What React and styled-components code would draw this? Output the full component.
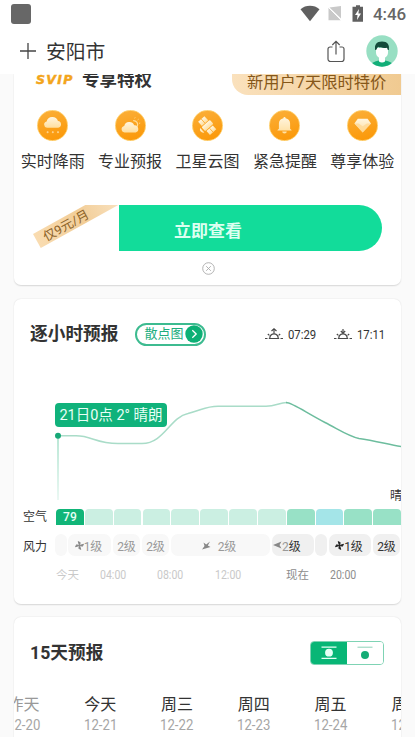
import React from 'react';
import styled, { createGlobalStyle } from 'styled-components';

const GlobalStyle = createGlobalStyle`
  * { box-sizing: border-box; }
  body {
    margin: 0;
    background: #fafafa;
    color: #333;
    font-family: Roboto, 'Noto Sans CJK SC', sans-serif;
    overflow: hidden;
  }
  svg { display: block; flex: none; }
`

const Screen = styled.div`
  width: 415px;
  height: 737px;
  overflow: hidden;
  display: flex;
  flex-direction: column;
`

const StatusBar = styled.div`
  height: 28px;
  flex: none;
  background: #fff;
  display: flex;
  align-items: center;
  padding: 0 9px 0 11px;
`

const AppDot = styled.div`
  width: 20px;
  height: 20px;
  border-radius: 3px;
  background: #676767;
  margin-right: auto;
`

const Clock = styled.div`
  font-size: 17px;
  font-weight: 500;
  line-height: 20px;
  color: #666;
  width: 33px;
  margin-left: 9px;
  letter-spacing: -0.1px;
`

const Header = styled.div`
  height: 46px;
  flex: none;
  background: #fff;
  display: flex;
  align-items: center;
  padding: 0 17px 0 20px;
`

const City = styled.div`
  font-size: 19.8px;
  line-height: 28px;
  padding-top: 3px;
  margin-left: 10px;
  margin-right: auto;
`

const Spacer = styled.div`
  width: 21px;
`

const Content = styled.div`
  flex: 1;
  min-height: 0;
  overflow: hidden;
  padding: 0 14px;
`

const Card = styled.div`
  height: ${p => p.$height}px;
  background: #fff;
  border-radius: ${p => (p.$first ? '0 0 7px 7px' : '7px')};
  box-shadow: 0 0.5px 1.5px rgba(0, 0, 0, 0.14);
  overflow: hidden;
  margin-bottom: ${p => p.$gap || 0}px;
`

const VipHead = styled.div`
  height: 21px;
  display: flex;
  align-items: flex-start;
  padding-left: 22px;
  overflow: hidden;
`

const Svip = styled.span`
  width: 40px;
  margin: -5px 6px 0 0;
  font: italic 700 12.5px/22px 'DejaVu Sans', sans-serif;
  letter-spacing: 1.3px;
  -webkit-text-stroke: 0.5px #f3a51c;
  color: #f3a51c;
`

const VipTitle = styled.span`
  margin-top: -5px;
  font-size: 17.5px;
  line-height: 23px;
  font-weight: 700;
`

const Offer = styled.div`
  margin-left: auto;
  width: 169px;
  height: 21px;
  padding-left: 15px;
  border-radius: 0 0 0 16px;
  background: linear-gradient(90deg, #fae1bd, #f0ca91);
  color: #855719;
  font-size: 16.3px;
  line-height: 17px;
  white-space: nowrap;
`

const Perks = styled.div`
  display: grid;
  grid-template-columns: repeat(5, 1fr);
  padding-top: 15px;
`

const Perk = styled.div`
  display: flex;
  flex-direction: column;
  align-items: center;
  font-size: 16px;
  line-height: 22px;
  gap: 10px;
  white-space: nowrap;
`

const BuyRow = styled.div`
  position: relative;
  height: 46px;
  margin-top: 32px;
  padding: 0 19px 0 105px;
  overflow: hidden;
`

const BuyButton = styled.div`
  height: 46px;
  background: #12dc9a;
  border-radius: 0 23px 23px 0;
  color: #dcfff0;
  font-size: 17px;
  font-weight: 700;
  line-height: 52px;
  padding-left: 55px;
`

const PriceClip = styled.div`
  position: absolute;
  left: 0;
  top: 0;
  width: 105px;
  height: 46px;
  overflow: hidden;
`

/* slanted price tag laid over the left part of the button row */
const PriceTag = styled.div`
  position: absolute;
  left: 16px;
  top: -3px;
  width: 125px;
  height: 16px;
  padding-left: 8px;
  transform-origin: 0 0;
  transform: translate(3px, 32px) rotate(-29deg);
  background: linear-gradient(90deg, #f9dcb1, #f2cd97 40%, #fae6c8 80%);
  color: #8b6127;
  font-size: 12.6px;
  line-height: 17px;
`

const CloseRow = styled.div`
  display: flex;
  justify-content: center;
  padding: 11px 0 0 2px;
`

const CardHead = styled.div`
  display: flex;
  align-items: center;
  height: ${p => p.$height}px;
  padding: 0 ${p => p.$right || 16}px 0 16px;
`

const Title = styled.div`
  font-size: 17.7px;
  font-weight: 700;
  line-height: 24px;
  white-space: nowrap;
`

const ScatterPill = styled.div`
  display: flex;
  align-items: center;
  justify-content: space-between;
  width: 71px;
  height: 23px;
  margin-left: 17px;
  margin-right: auto;
  padding: 0 1px 0 7px;
  border: 2px solid #3dbb90;
  border-radius: 12px;
  color: #20ad7d;
  font-size: 13px;
  line-height: 18px;
  white-space: nowrap;
`

const SunTime = styled.div`
  display: flex;
  align-items: center;
  gap: 5px;
  margin-left: ${p => p.$left || 0}px;
`

/* narrow numerals */
const Num = styled.span`
  display: inline-block;
  width: ${p => p.$width}px;
  font-size: ${p => p.$size || 13.5}px;
  transform: scaleX(${p => p.$scale || 0.84});
  transform-origin: 0 50%;
  white-space: nowrap;
`

const Chart = styled.div`
  position: relative;
  height: 140px;
`

const Tooltip = styled.div`
  position: absolute;
  left: 41px;
  top: 34px;
  width: 112px;
  height: 24px;
  border-radius: 4px;
  background: #10b27b;
  color: #e9fff6;
  font-size: 14.5px;
  line-height: 25px;
  text-align: center;
  white-space: nowrap;
`

const WeatherText = styled.div`
  position: absolute;
  left: 376px;
  bottom: 4px;
  font-size: 12px;
  line-height: 18px;
`

const Row = styled.div`
  display: flex;
  align-items: center;
  height: ${p => p.$height}px;
  margin-top: ${p => p.$top || 0}px;
`

const RowLabel = styled.div`
  width: 42px;
  flex: none;
  padding: ${p => p.$drop || 0}px 0 0 9px;
  font-size: 12px;
  line-height: 16px;
`

const AirCell = styled.div`
  flex: none;
  width: 27.8px;
  height: 16px;
  margin-right: 1.05px;
  border-radius: 4px 4px 0 0;
  background: ${p => p.$color};
  color: #e8fff5;
  font-size: 12px;
  font-weight: 500;
  line-height: 16px;
  text-align: center;
`

const WindCell = styled.div`
  flex: none;
  display: flex;
  align-items: center;
  justify-content: center;
  width: ${p => p.$width}px;
  height: 22px;
  margin-left: ${p => p.$gap}px;
  padding-right: ${p => p.$shift || 0}px;
  border-radius: 7px;
  background: ${p => (p.$past ? '#f8f8f8' : '#f0f0f0')};
  color: ${p => (p.$past ? '#999' : '#333')};
  font-size: 12px;
  white-space: nowrap;
`

const Faded = styled.span`
  color: #999;
`

const Hours = styled.div`
  display: flex;
  margin: 10px 0 0 42px;
  height: 18px;
`

const Hour = styled.div`
  flex: none;
  width: ${p => p.$width}px;
  font-size: 11.5px;
  line-height: 18px;
  color: ${p => (p.$past ? '#c9c9c9' : '#8d8d8d')};
`

const Toggle = styled.div`
  display: flex;
  width: 74px;
  height: 24px;
  margin-left: auto;
  border: 1px solid #7fd3b4;
  border-radius: 4px;
  overflow: hidden;
`

const ToggleHalf = styled.div`
  flex: 1;
  display: flex;
  align-items: center;
  justify-content: center;
  background: ${p => (p.$active ? '#08b676' : '#fff')};
`

const Days = styled.div`
  display: flex;
  margin-left: -29px;
  padding-top: 5px;
`

const Day = styled.div`
  flex: none;
  width: 76.8px;
  display: flex;
  flex-direction: column;
  align-items: center;
  font-size: 16px;
  line-height: 23px;
  color: ${p => (p.$past ? '#999' : '#333')};
`

const DayDate = styled.div`
  font-size: 14px;
  line-height: 19px;
  color: #a6a6a6;
  transform: scaleX(0.94);
`

const perks = [
  { name: '实时降雨', icon: 'rain' },
  { name: '专业预报', icon: 'cloud' },
  { name: '卫星云图', icon: 'satellite' },
  { name: '紧急提醒', icon: 'bell' },
  { name: '尊享体验', icon: 'diamond' },
]

const air = [
  '#11b578', '#cbefe2', '#cbefe2', '#cbefe2', '#cbefe2', '#cbefe2',
  '#cbefe2', '#cbefe2', '#98e1c6', '#a4e5e8', '#98e1c6', '#98e1c6',
]

const hours = [
  { text: '今天', width: 43.5, past: true },
  { text: '04:00', width: 57.5, past: true },
  { text: '08:00', width: 58, past: true },
  { text: '12:00', width: 71, past: true },
  { text: '现在', width: 44 },
  { text: '20:00', width: 40 },
]

const days = [
  { name: '昨天', date: '12-20', past: true },
  { name: '今天', date: '12-21' },
  { name: '周三', date: '12-22' },
  { name: '周四', date: '12-23' },
  { name: '周五', date: '12-24' },
  { name: '周六', date: '12-25' },
]

function PerkIcon({ type }) {
  return (
    <svg width="31" height="31" viewBox="0 0 31 31">
      <defs>
        <linearGradient id={`bg-${type}`} x1="0" y1="0" x2="0.3" y2="1">
          <stop offset="0" stopColor="#fbb03b" />
          <stop offset="1" stopColor="#fb9a0c" />
        </linearGradient>
        <linearGradient id={`fg-${type}`} x1="0" y1="0" x2="0" y2="1">
          <stop offset="0" stopColor="#fff5df" />
          <stop offset="1" stopColor="#ffdf9f" />
        </linearGradient>
      </defs>
      <circle cx="15.5" cy="15.5" r="15.2" fill={`url(#bg-${type})`} stroke="#ffe08a" strokeWidth="0.6" />
      <g fill={`url(#fg-${type})`}>
        {type === 'rain' && (
          <>
            <path d="M10 17.800a3.200 3.200 0 0 1-.4-6.300 6 6 0 0 1 11.400-.6 3.500 3.500 0 0 1 .2 6.900z" />
            <circle cx="10.600" cy="22.300" r="1" opacity="0.7" />
            <circle cx="15.800" cy="22.300" r="1" opacity="0.7" />
            <circle cx="21" cy="22.300" r="1" opacity="0.7" />
          </>
        )}
        {type === 'cloud' && (
          <>
            <path d="M9.500 22.400a3.300 3.300 0 0 1-.3-6.500 5.300 5.300 0 0 1 10-.7 3.700 3.700 0 0 1 1.500 7.200z" />
            <path d="M18.200 10.600a4.200 4.200 0 0 1 4.100 6" fill="none" stroke="#ffdc96" strokeWidth="1.300" />
            <path d="M19.400 8.200l1-.6M22.600 10l1-.8M24 13.300l1.200-.2" stroke="#ffdc96" strokeWidth="0.9" />
          </>
        )}
        {type === 'satellite' && (
          <g transform="rotate(-42 15.5 15.5)">
            <rect x="10" y="12.800" width="11" height="5.400" rx="1" />
            <rect x="11" y="6.500" width="8.500" height="5.600" />
            <rect x="11" y="19" width="8.500" height="5.200" />
            <path d="M15.200 6.500v5.600M15.200 19v5.200" stroke="#fbaa30" strokeWidth="0.8" />
            <path d="M8.500 12.500v6a3.200 3.200 0 0 1 0-6z" />
          </g>
        )}
        {type === 'bell' && (
          <path d="M8.500 20.600V20l1.400-1.200V13.500a5.600 5.600 0 0 1 4.500-5.300 1.100 1.100 0 0 1 2.200 0 5.600 5.600 0 0 1 4.500 5.300v5.300l1.400 1.200v.6zM13.200 21.400h4.600a2.300 2 0 0 1-4.600 0z" />
        )}
        {type === 'diamond' && (
          <>
            <path d="M10.800 8.800h9.800l3.400 4.800-8.300 9-8.300-9z" />
            <path d="M7.400 13.600h4.200l4.100 2.600 4.100-2.600H24l-8.300 9z" fill="#ffd68e" opacity="0.7" />
          </>
        )}
      </g>
    </svg>
  )
}

function SunIcon({ down }) {
  return (
    <svg width="18" height="13" viewBox="0 0 18 13" fill="none" stroke="#484848" strokeWidth="1.200">
      <path d="M0 10.500h2.500M3.800 10.500h10.400M15.500 10.500H18M4.800 10a4.200 4.200 0 0 1 8.400 0M2.800 6l1.600 1.400M15.200 6l-1.600 1.400M9 1v5" />
      <path d={down ? 'M6.800 3L9 5.200 11.200 3' : 'M6.500 3L9 .8 11.500 3'} />
    </svg>
  )
}

function Fan({ color }) {
  return (
    <svg width="9" height="9" viewBox="0 0 9 9" fill={color}>
      <path d="M4.500 4.500L3.200 .6l2 1zM4.500 4.500L8.500 3.200l-1 2zM4.500 4.500L5.800 8.400l-2-1zM4.500 4.500L.5 5.800l1-2z" stroke={color} strokeWidth="0.9" />
    </svg>
  )
}

function StatusIcons() {
  return (
    <svg width="64" height="20" viewBox="0 0 64 20">
      <path d="M0.500 5.200a15 15 0 0 1 19 0L10 17.200z" fill="#606060" />
      <path d="M41 2v12.500L29.500 3.500z" fill="#c9c9c9" />
      <path d="M28.500 3.500v12.700h12.300z" fill="#c9c9c9" />
      <path d="M27.500 2.500l14 14" stroke="#fff" strokeWidth="1" />
      <path d="M56 1.200h4v1.600h3v15H52.500v-15H56z" fill="#606060" />
      <path d="M59 5l-4 6h2.500L57 16l4-6.500h-2.600z" fill="#fff" />
    </svg>
  )
}

function Avatar() {
  return (
    <svg width="32" height="32" viewBox="0 0 32 32">
      <clipPath id="face"><circle cx="16" cy="16" r="15.700" /></clipPath>
      <g clipPath="url(#face)">
        <rect width="32" height="32" fill="#98dfc3" />
        <path d="M4 32c1-5 6-6.500 12-6.500S27 27 28 32z" fill="#12ae78" />
        <path d="M13 20h6v6.500c-1.500 1.200-4.500 1.200-6 0z" fill="#fff" />
        <path d="M10 13h12v4.500c0 3.500-3 6-6 6s-6-2.500-6-6z" fill="#fff" />
        <path d="M9.200 15C8.300 9.500 10.500 6.500 16 6.500S23.700 9.500 22.800 15h-.9l-.9-2.200c-3 .4-6.500.2-9-1l-1.900 3.200z" fill="#134b3a" />
      </g>
    </svg>
  )
}

export default function App() {
  return (
    <Screen>
      <GlobalStyle />
      <StatusBar>
        <AppDot />
        <StatusIcons />
        <Clock>4:46</Clock>
      </StatusBar>
      <Header>
        <svg width="16" height="16" viewBox="0 0 16 16" stroke="#444" strokeWidth="1.300">
          <path d="M8 0v16M0 8h16" />
        </svg>
        <City>安阳市</City>
        <svg width="18" height="23" viewBox="0 0 18 23" fill="none" stroke="#555" strokeWidth="1.200">
          <path d="M5.500 7H3a2 2 0 0 0-2 2v10a2.500 2.500 0 0 0 2.500 2.500h11A2.500 2.500 0 0 0 17 19V9a2 2 0 0 0-2-2h-2.500M9 14.500V1.500M5.300 5L9 1.300 12.700 5" />
        </svg>
        <Spacer />
        <Avatar />
      </Header>

      <Content>
        <Card $first $height={211} $gap={14}>
          <VipHead>
            <Svip>SVIP</Svip>
            <VipTitle>专享特权</VipTitle>
            <Offer>新用户7天限时特价</Offer>
          </VipHead>
          <Perks>
            {perks.map(p => (
              <Perk key={p.name}>
                <PerkIcon type={p.icon} />
                <span>{p.name}</span>
              </Perk>
            ))}
          </Perks>
          <BuyRow>
            <BuyButton>立即查看</BuyButton>
            <PriceClip>
              <PriceTag>仅9元/月</PriceTag>
            </PriceClip>
          </BuyRow>
          <CloseRow>
            <svg width="13" height="13" viewBox="0 0 13 13" fill="none" stroke="#aaa" strokeWidth="0.9">
              <circle cx="6.500" cy="6.500" r="5.800" />
              <path d="M4.200 4.200l4.600 4.600M8.800 4.200l-4.600 4.600" />
            </svg>
          </CloseRow>
        </Card>

        <Card $height={305} $gap={13}>
          <CardHead $height={70}>
            <Title>逐小时预报</Title>
            <ScatterPill>
              散点图
              <svg width="18" height="18" viewBox="0 0 18 18">
                <circle cx="9" cy="9" r="8.700" fill="#0cb075" />
                <path d="M7.300 5.200L11.200 9l-3.900 3.800" fill="none" stroke="#fff" strokeWidth="1.300" />
              </svg>
            </ScatterPill>
            <SunTime>
              <SunIcon />
              <Num $width={28}>07:29</Num>
            </SunTime>
            <SunTime $left={18}>
              <SunIcon down />
              <Num $width={28}>17:11</Num>
            </SunTime>
          </CardHead>

          <Chart>
            <svg width="387" height="140" viewBox="14 369 387 140" fill="none">
              <defs>
                <linearGradient id="drop" x1="0" y1="0" x2="0" y2="1">
                  <stop offset="0" stopColor="#9bdcc3" />
                  <stop offset="1" stopColor="#e2f5ee" />
                </linearGradient>
              </defs>
              <rect x="57.300" y="436" width="1.400" height="64" fill="url(#drop)" />
              <path d="M58 435.800H76C92 435.800 96 443.500 118 443.500H142C164 443.500 170 417 188 413.500C202 410 206 406.300 218 406.300H266C276 406.300 279 402.600 287 402.600" stroke="#a9dcc8" strokeWidth="1.500" />
              <path d="M286 402.600C292 402.600 305 412 325 422.500C338 429 348 436 359 438.500C373 440.500 385 443.500 401 446.500" stroke="#6dbd9e" strokeWidth="1.500" />
              <circle cx="58" cy="435.800" r="3" fill="#17a877" />
            </svg>
            <Tooltip>21日0点 2° 晴朗</Tooltip>
            <WeatherText>晴</WeatherText>
          </Chart>

          <Row $height={16}>
            <RowLabel>空气</RowLabel>
            {air.map((color, i) => (
              <AirCell key={i} $color={color}>{i === 0 ? '79' : ''}</AirCell>
            ))}
          </Row>
          <Row $height={22} $top={9}>
            <RowLabel $drop={3}>风力</RowLabel>
            <WindCell $past $width={12} $gap={-1} />
            <WindCell $past $width={43} $gap={1} $shift={2}><Fan color="#888" />1级</WindCell>
            <WindCell $past $width={27} $gap={2}>2级</WindCell>
            <WindCell $past $width={27} $gap={2}>2级</WindCell>
            <WindCell $past $width={99} $gap={2} $shift={3}>
              <svg width="16" height="9" viewBox="0 0 16 9" fill="#888">
                <path d="M8 .5L5.800 4.500 8.500 6 0 8.500 2.500 5 1.500 1.500 4.200 3.600z" />
              </svg>
              2级
            </WindCell>
            <WindCell $width={42} $gap={2} $shift={12}>
              <svg width="9" height="8" viewBox="0 0 9 8" fill="#888">
                <path d="M0 4l8.500-3.500L6.500 4l2 3.500z" />
              </svg>
              <span><Faded>2</Faded>级</span>
            </WindCell>
            <WindCell $width={12} $gap={1} />
            <WindCell $width={42} $gap={2} $shift={2}><Fan color="#222" />1级</WindCell>
            <WindCell $width={27} $gap={2}>2级</WindCell>
          </Row>
          <Hours>
            {hours.map(h => (
              <Hour key={h.text} $width={h.width} $past={h.past}>
                {h.text.length > 2 ? <Num $width={28} $size={12} $scale={0.88}>{h.text}</Num> : h.text}
              </Hour>
            ))}
          </Hours>
        </Card>

        <Card $height={200}>
          <CardHead $height={71} $right={17}>
            <Title>15天预报</Title>
            <Toggle>
              <ToggleHalf $active>
                <svg width="16" height="14" viewBox="0 0 16 14" fill="#e6fff5">
                  <path d="M0.500 0.500h15v1.300H0.500zM0.500 11.700h15V13H0.500z" />
                  <circle cx="8" cy="6.700" r="3.900" />
                </svg>
              </ToggleHalf>
              <ToggleHalf>
                <svg width="16" height="14" viewBox="0 0 16 14">
                  <path d="M0.500 1.200h15" stroke="#8fd2b8" />
                  <circle cx="8" cy="9" r="4" fill="#14ac75" />
                </svg>
              </ToggleHalf>
            </Toggle>
          </CardHead>
          <Days>
            {days.map(d => (
              <Day key={d.date} $past={d.past}>
                {d.name}
                <DayDate>{d.date}</DayDate>
              </Day>
            ))}
          </Days>
        </Card>
      </Content>
    </Screen>
  )
}
